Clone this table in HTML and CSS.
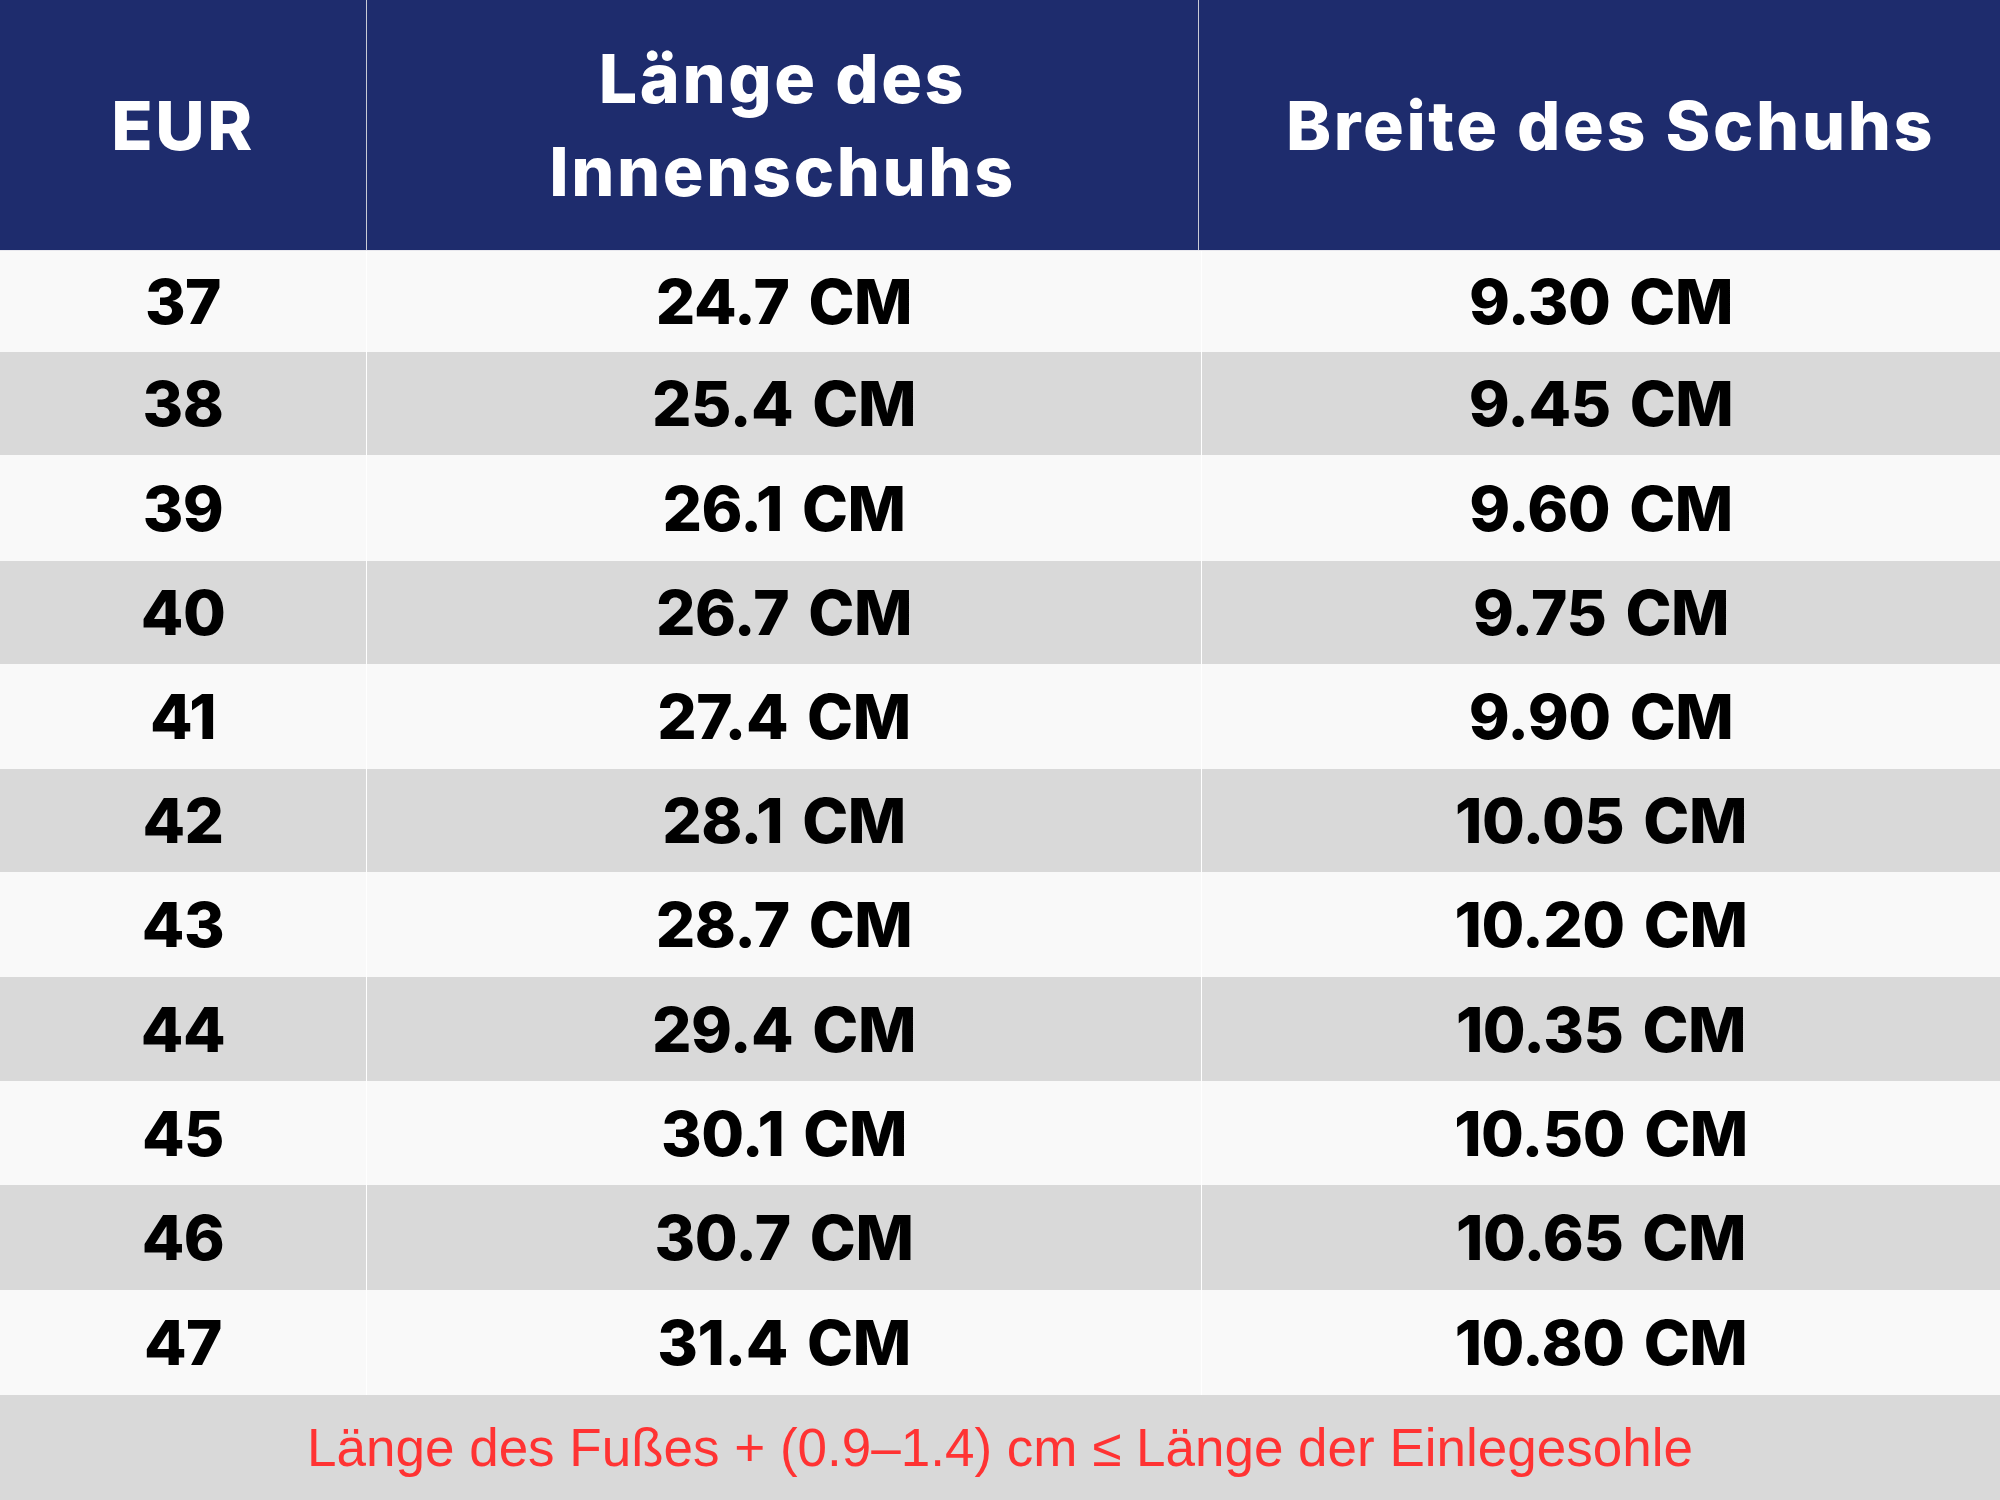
FILE: index.html
```html
<!DOCTYPE html>
<html lang="de">
<head>
<meta charset="utf-8">
<title>Größentabelle</title>
<link rel="stylesheet" href="styles.css">
</head>
<body>
<div class="chart">
  <div class="row head">
    <div class="cell">EUR</div>
    <div class="cell">Länge des<br>Innenschuhs</div>
    <div class="cell wide">Breite des Schuhs</div>
  </div>
  <div class="row light"><div class="cell">37</div><div class="cell">24.7 CM</div><div class="cell">9.30 CM</div></div>
  <div class="row dark"><div class="cell">38</div><div class="cell">25.4 CM</div><div class="cell">9.45 CM</div></div>
  <div class="row light"><div class="cell">39</div><div class="cell">26.1 CM</div><div class="cell">9.60 CM</div></div>
  <div class="row dark"><div class="cell">40</div><div class="cell">26.7 CM</div><div class="cell">9.75 CM</div></div>
  <div class="row light"><div class="cell">41</div><div class="cell">27.4 CM</div><div class="cell">9.90 CM</div></div>
  <div class="row dark"><div class="cell">42</div><div class="cell">28.1 CM</div><div class="cell">10.05 CM</div></div>
  <div class="row light"><div class="cell">43</div><div class="cell">28.7 CM</div><div class="cell">10.20 CM</div></div>
  <div class="row dark"><div class="cell">44</div><div class="cell">29.4 CM</div><div class="cell">10.35 CM</div></div>
  <div class="row light"><div class="cell">45</div><div class="cell">30.1 CM</div><div class="cell">10.50 CM</div></div>
  <div class="row dark"><div class="cell">46</div><div class="cell">30.7 CM</div><div class="cell">10.65 CM</div></div>
  <div class="row light"><div class="cell">47</div><div class="cell">31.4 CM</div><div class="cell">10.80 CM</div></div>
  <div class="foot">Länge des Fußes + (0.9–1.4) cm ≤ Länge der Einlegesohle</div>
</div>
</body>
</html>
```
FILE: styles.css
```css
html, body {
  margin: 0;
  padding: 0;
}
body {
  width: 2000px;
  height: 1500px;
  overflow: hidden;
}
.chart {
  width: 2000px;
  height: 1500px;
  display: flex;
  flex-direction: column;
  font-family: Inter, "Open Sans", sans-serif;
}
.row {
  display: grid;
  grid-template-columns: 366px 835px 1fr;
  height: 104px;
  flex: none;
}
.row:nth-child(2) { height: 101px; }
.row:nth-child(3) { height: 103px; }
.row:nth-child(4) { height: 106px; }
.row:nth-child(5) { height: 103px; }
.row:nth-child(6) { height: 105px; }
.row:nth-child(7) { height: 103px; }
.row:nth-child(8) { height: 105px; }
.row:nth-child(9) { height: 104px; }
.row:nth-child(10) { height: 104px; }
.row:nth-child(11) { height: 105px; }
.row:nth-child(12) { height: 105px; }
.cell {
  display: flex;
  align-items: center;
  justify-content: center;
  text-align: center;
  font-weight: 800;
  font-size: 62px;
  color: #000;
  letter-spacing: -0.5px;
  word-spacing: 6px;
}
.row .cell + .cell {
  border-left: 1px solid #ffffff;
}
.row.light { background: #f9f9f9; }
.row.dark { background: #d9d9d9; }
.row.head {
  grid-template-columns: 366px 832px 1fr;
  height: 251px;
  background: #1e2c6d;
  border-bottom: 1px solid #e8e8ee;
  box-sizing: border-box;
}
.row.head .cell {
  color: #ffffff;
  font-size: 68px;
  line-height: 93px;
  font-weight: 800;
  letter-spacing: 2.6px;
  word-spacing: 0;
}
.row.head .cell.wide {
  padding-left: 22px;
}
.row.head .cell + .cell {
  border-left: 1px solid #c9cbd6;
}
.foot {
  flex: 1;
  background: #d9d9d9;
  display: flex;
  align-items: center;
  justify-content: center;
  font-family: "Liberation Sans", Arial, sans-serif;
  font-size: 53px;
  color: #ff3333;
}
```
